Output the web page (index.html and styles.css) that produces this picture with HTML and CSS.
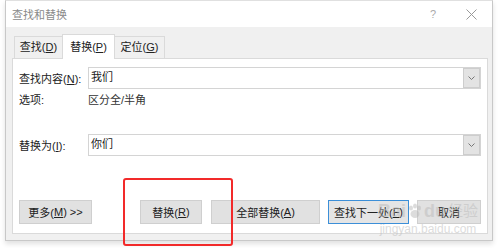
FILE: index.html
```html
<!DOCTYPE html>
<html lang="zh">
<head>
<meta charset="utf-8">
<link rel="stylesheet" href="styles.css">
</head>
<body>
<div class="window">
  <div class="titlebar">
    <span class="title">查找和替换</span>
    <span class="help">?</span>
    <span class="close">
      <svg width="11" height="11" viewBox="0 0 11 11"><path d="M0.5 0.5L10.5 10.5M10.5 0.5L0.5 10.5" stroke="#999" stroke-width="1" fill="none"/></svg>
    </span>
  </div>
  <div class="tabs">
    <div class="tab">查找(<u>D</u>)</div>
    <div class="tab active">替换(<u>P</u>)</div>
    <div class="tab">定位(<u>G</u>)</div>
  </div>
  <div class="panel">
    <div class="row first">
      <span class="label">查找内容(<u>N</u>):</span>
      <div class="combo"><span class="value">我们</span><span class="drop"><svg width="7" height="4" viewBox="0 0 7 4"><path d="M0.5 0.5L3.5 3.5L6.5 0.5" stroke="#777" fill="none"/></svg></span></div>
    </div>
    <div class="row opts">
      <span class="label">选项:</span>
      <span class="optval">区分全/半角</span>
    </div>
    <div class="row second">
      <span class="label">替换为(<u>I</u>):</span>
      <div class="combo"><span class="value">你们</span><span class="drop"><svg width="7" height="4" viewBox="0 0 7 4"><path d="M0.5 0.5L3.5 3.5L6.5 0.5" stroke="#777" fill="none"/></svg></span></div>
    </div>
    <div class="buttons">
      <div class="btn more">更多(<u>M</u>) &gt;&gt;</div>
      <div class="btn replace">替换(<u>R</u>)</div>
      <div class="btn all">全部替换(<u>A</u>)</div>
      <div class="btn next">查找下一处(<u>F</u>)</div>
      <div class="btn cancel">取消</div>
    </div>
  </div>
</div>
<div class="highlight"></div>
<div class="watermark">
  <div class="wm-big"><span>Bai</span><svg class="paw" width="16" height="16" viewBox="0 0 16 16"><g fill="#bbbbbb"><ellipse cx="4" cy="5" rx="2" ry="2.6"/><ellipse cx="8" cy="3" rx="2" ry="2.6"/><ellipse cx="12" cy="5" rx="2" ry="2.6"/><ellipse cx="8" cy="11" rx="4.5" ry="4"/></g></svg><span>du</span><span class="wm-cn">经验</span></div>
  <div class="wm-small">jingyan.baidu.com</div>
</div>
</body>
</html>
```
FILE: styles.css
```css
html, body {
  margin: 0;
  padding: 0;
  background: #ffffff;
  width: 500px;
  height: 248px;
  overflow: hidden;
  font-family: "Liberation Sans", "Noto Sans CJK SC", sans-serif;
  font-size: 11px;
  color: #222;
}
u { text-decoration: underline; text-underline-offset: 1px; }
.window {
  position: relative;
  margin-left: 5px;
  width: 486px;
  height: 239px;
  border: 1px solid #c8c8c8;
  border-top-color: #e0e0e0;
  background: #f0f0f0;
  box-shadow: 0 3px 5px rgba(0,0,0,0.12);
  display: flex;
  flex-direction: column;
}
.titlebar {
  height: 26px;
  background: #ffffff;
  display: flex;
  align-items: center;
  flex-shrink: 0;
}
.title {
  padding-left: 6px;
  color: #8a8a8a;
  font-size: 11px;
  flex: 1;
}
.help {
  color: #aaa;
  font-size: 11px;
  width: 14px;
  margin-right: 26px;
  text-align: center;
}
.close {
  display: flex;
  margin-right: 15px;
}
.tabs {
  display: flex;
  align-items: flex-end;
  padding-left: 8px;
  margin-top: 7px;
  height: 24px;
  flex-shrink: 0;
}
.tab {
  height: 22px;
  line-height: 21px;
  border: 1px solid #dadada;
  border-bottom: none;
  background: #f0f0f0;
  color: #222;
  box-sizing: border-box;
  white-space: nowrap;
  text-align: center;
  padding: 0;
}
.tab:first-child { width: 49px; margin-right: -1px; }
.tab.active {
  height: 25px;
  line-height: 24px;
  width: 53px;
  background: #ffffff;
  position: relative;
  z-index: 1;
  margin-bottom: -1px;
}
.tab:last-child { width: 51px; margin-left: -1px; }
.panel {
  margin: 0 4px 6px 6px;
  flex: 1;
  background: #ffffff;
  border: 1px solid #dadada;
  padding: 8px 6px 0 6px;
  display: flex;
  flex-direction: column;
}
.row {
  display: flex;
  align-items: center;
}
.label {
  width: 69px;
  flex-shrink: 0;
  white-space: nowrap;
}
.combo {
  flex: 1;
  height: 22px;
  border: 1px solid #d4d4d4;
  box-sizing: border-box;
  display: flex;
  align-items: stretch;
}
.value {
  flex: 1;
  padding-left: 2px;
  line-height: 19px;
}
.drop {
  width: 15px;
  background: #e3e3e3;
  border: 1px solid #cdcdcd;
  display: flex;
  align-items: center;
  justify-content: center;
}
.row.opts {
  margin-top: 1px;
  height: 18px;
}
.optval { color: #333; }
.row.second { margin-top: 26px; }
.buttons {
  display: flex;
  margin-top: 44px;
}
.btn {
  height: 24px;
  box-sizing: border-box;
  background: #e1e1e1;
  border: 1px solid #cfcfcf;
  display: flex;
  align-items: center;
  justify-content: center;
  color: #222;
  white-space: nowrap;
}
.btn.more { width: 73px; margin-right: 48px; }
.btn.replace { width: 62px; margin-right: 9px; }
.btn.all { width: 109px; margin-right: 8px; }
.btn.next { width: 81px; margin-right: 8px; border: 1px solid #3c8fd8; background: #e5e5e5; }
.btn.cancel { width: 64px; }
.highlight {
  position: absolute;
  left: 123px;
  top: 178px;
  width: 106px;
  height: 64px;
  border: 2px solid #f22a2a;
  border-radius: 3px;
}
.watermark {
  position: absolute;
  left: 380px;
  top: 201px;
  width: 96px;
  display: flex;
  flex-direction: column;
  align-items: center;
  color: #bbbbbb;
  opacity: 0.5;
  pointer-events: none;
  white-space: nowrap;
}
.wm-big {
  display: flex;
  align-items: center;
  height: 20px;
  font-size: 18px;
  font-weight: bold;
  line-height: 20px;
}
.paw { margin: 0 1px; }
.wm-cn { font-size: 15px; margin-left: 2px; font-weight: normal; }
.wm-small { font-size: 12px; line-height: 13px; margin-top: 2px; }
```
